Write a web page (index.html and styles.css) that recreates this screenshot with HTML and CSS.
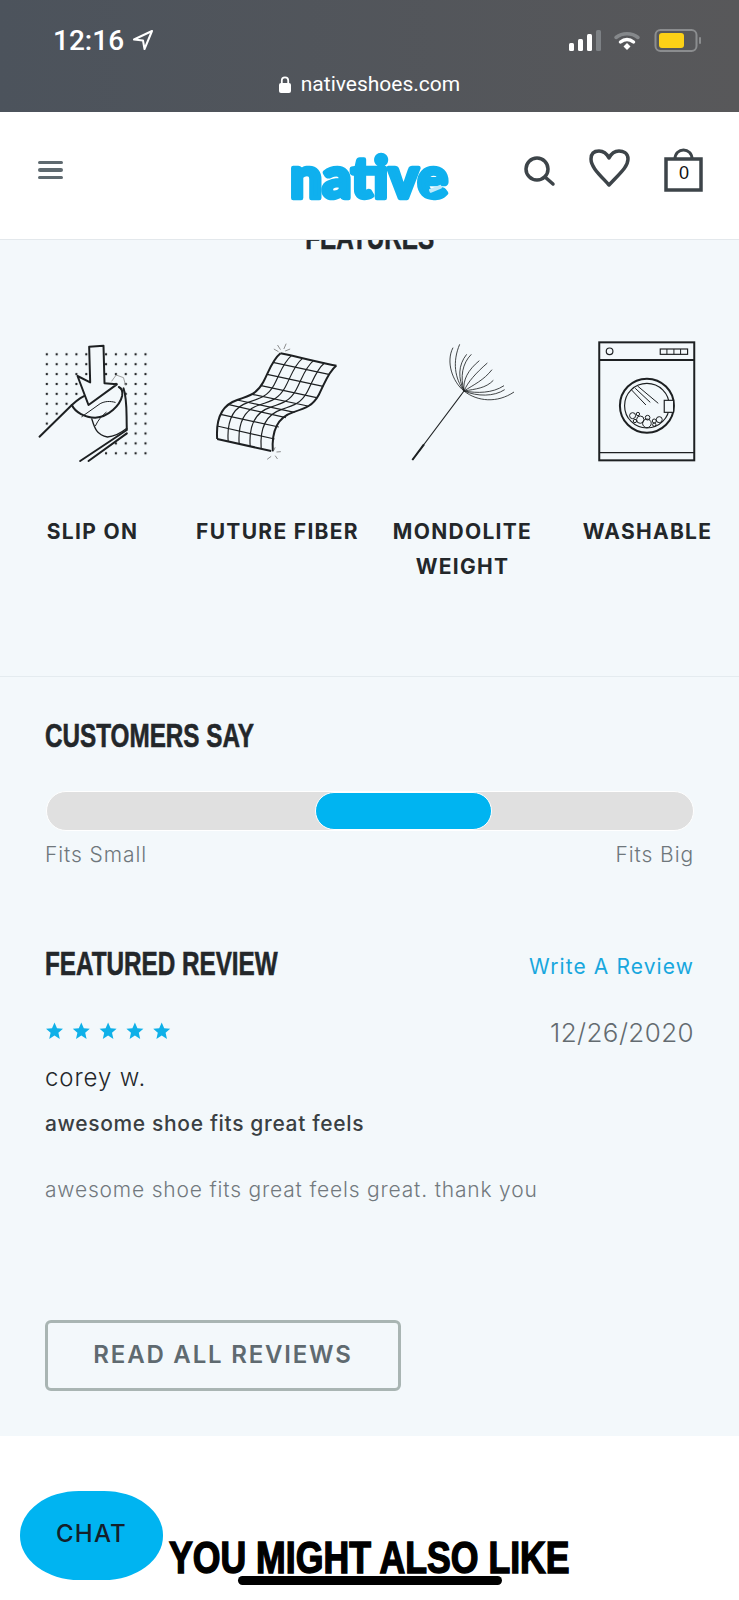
FILE: index.html
```html
<!DOCTYPE html>
<html lang="en">
<head>
    <meta charset="UTF-8">
    <meta name="viewport" content="width=device-width, initial-scale=1.0">
    <title>Native Shoes</title>
    <link rel="stylesheet" href="styles.css">
</head>
<body>
    <div class="status-bar">
        <div class="status-row">
            <div class="status-time">
                <span>12:16</span>
                <svg width="22" height="22" viewBox="0 0 22 22"><path d="M20 2 2 10.5l9 1 1.500 8.500z" fill="none" stroke="#fff" stroke-width="2" stroke-linejoin="round"/></svg>
            </div>
            <svg class="status-icons" width="146" height="24" viewBox="0 0 146 24">
                <rect x="0" y="15" width="5" height="8" rx="1.500" fill="#fff"/>
                <rect x="9" y="11" width="5" height="12" rx="1.500" fill="#fff"/>
                <rect x="18" y="6" width="5" height="17" rx="1.500" fill="#fff"/>
                <rect x="27" y="2" width="5" height="21" rx="1.500" fill="#7d8185"/>
                <path d="M47 9.500c6.500-5 15.500-5 22 0" fill="none" stroke="#85888b" stroke-width="3.500" stroke-linecap="round"/>
                <path d="M51.500 14c4-3.200 9-3.200 13 0" fill="none" stroke="#fff" stroke-width="3.500" stroke-linecap="round"/>
                <path d="M54.500 18.500 58 15l3.500 3.500-3.500 3.500z" fill="#fff"/>
                <rect x="86.500" y="2" width="41" height="21" rx="5" fill="none" stroke="#8b8d8f" stroke-width="2"/>
                <rect x="90" y="5" width="25" height="15" rx="3" fill="#fcd116"/>
                <rect x="130" y="9" width="2" height="7" rx="1" fill="#8b8d8f"/>
            </svg>
        </div>
        <div class="status-url">
            <svg width="12" height="17" viewBox="0 0 12 17"><rect x="0" y="7" width="12" height="10" rx="2" fill="#fff"/><path d="M2.800 8V4.500a3.200 3.200 0 0 1 6.400 0V8" fill="none" stroke="#fff" stroke-width="1.800"/></svg>
            <span>nativeshoes.com</span>
        </div>
    </div>

    <header class="site-header">
        <div class="menu-icon"><span></span><span></span><span></span></div>
        <svg class="logo" width="166" height="84" viewBox="0 -10 166 84">
            <text x="3" y="54" textLength="158" lengthAdjust="spacingAndGlyphs" class="logo-text">native</text>
            <rect x="142" y="43" width="13" height="4" rx="1" fill="#bfe9fa" transform="rotate(-22 148 45)"/>
        </svg>
        <div class="header-icons">
            <svg width="36" height="60" viewBox="0 0 36 60"><circle cx="13" cy="26" r="11" fill="none" stroke="#3d4449" stroke-width="3.500"/><path d="m21 34 8 7" stroke="#3d4449" stroke-width="3.500" stroke-linecap="round"/></svg>
            <svg width="44" height="60" viewBox="0 0 44 60"><path d="M22 42 C12 31 4 24 4 16 C4 9 9 8 12 8 C17 8 20 11 22 15 C24 11 27 8 32 8 C36 8 41 10 41 16 C41 24 32 31 22 42z" fill="none" stroke="#3d4449" stroke-width="3.500" stroke-linejoin="round"/></svg>
            <div class="bag">
                <svg width="42" height="60" viewBox="0 0 42 60"><rect x="3" y="14" width="35" height="31" fill="none" stroke="#3d4449" stroke-width="3.500"/><path d="M12 14c0-12 17-12 17 0" fill="none" stroke="#3d4449" stroke-width="3"/></svg>
                <span class="bag-count">0</span>
            </div>
        </div>
    </header>

    <section class="features">
        <h2 class="features-title condensed"><span>FEATURES</span></h2>
        <div class="feature-grid">
            <div class="feature">
                <svg width="185" height="125" viewBox="-60 45 554 375">
                    <defs>
                        <pattern id="dots" x="65" y="73" width="29.600" height="29.700" patternUnits="userSpaceOnUse"><circle cx="15" cy="15" r="3.500" fill="#1d2022"/></pattern>
                    </defs>
                    <rect x="65" y="73" width="326" height="327" fill="url(#dots)"/>
                    <path d="M40 345 155 240 190 215 310 190 324 240 324 320 205 412 40 412z" fill="#f3f8fb"/>
                    <g fill="none" stroke="#1d2022" stroke-linejoin="round" stroke-linecap="round">
                        <path d="M275 168 288 150 310 158 316 180" stroke="#888" stroke-width="2.500"/>
                        <path d="M58 335 155 240C175 222 190 212 205 208" stroke-width="6"/>
                        <path d="M155 240C165 262 195 278 225 278C265 276 300 240 306 212C308 200 304 190 296 186" stroke-width="6"/>
                        <path d="M310 190C322 225 318 260 320 315L180 408" stroke-width="6"/>
                        <path d="M205 408 320 325" stroke-width="6"/>
                        <path d="M215 282C222 305 228 330 262 336C285 335 305 322 320 310" stroke-width="4"/>
                        <path d="M185 275 240 236C255 228 270 228 285 232" stroke-width="3"/>
                        <path d="M226 302C234 285 245 272 258 262" stroke-width="3"/>
                        <path d="M207 65 250 62 253 175 290 178 205 240 172 153 210 172z" fill="#f3f8fb" stroke-width="6"/>
                    </g>
                </svg>
                <p>SLIP ON</p>
            </div>
            <div class="feature">
                <svg width="185" height="125" viewBox="494 45 554 375">
                    <defs>
                        <path id="wave" d="M780 85C755 105 745 140 728 172C710 205 690 212 650 225C610 238 585 270 590 342"/>
                    </defs>
                    <g fill="none" stroke="#1d2022" stroke-width="3.500">
                        <use href="#wave" transform="translate(33 7)"/>
                        <use href="#wave" transform="translate(66 15)"/>
                        <use href="#wave" transform="translate(99 22)"/>
                        <use href="#wave" transform="translate(132 29)"/>
                        <path d="M757 112 925 148M740 148 908 184M722 182 888 218M695 208 862 243M650 225 822 262M622 238 796 278M600 268 775 306M590 303 762 342"/>
                    </g>
                    <g fill="none" stroke="#1d2022" stroke-width="6" stroke-linejoin="round">
                        <use href="#wave"/>
                        <use href="#wave" transform="translate(167 37)"/>
                        <path d="M780 85C835 96 895 112 948 122M590 342 752 378"/>
                    </g>
                    <path d="M760 72 774 80M771 60 780 74M797 56 790 72M809 72 794 78M764 367 760 376M781 380 768 381M771 402 764 392M740 403 752 394" fill="none" stroke="#777" stroke-width="2.500"/>
                </svg>
                <p>FUTURE FIBER</p>
            </div>
            <div class="feature">
                <svg width="185" height="125" viewBox="-31.500 45 554 375">
                    <path d="M95 405 250 198" fill="none" stroke="#1d2022" stroke-width="3.500"/>
                    <path d="M95 405 130 358" fill="none" stroke="#1d2022" stroke-width="6"/>
                    <g fill="none" stroke="#1d2022" stroke-width="2.500">
                        <path d="M250 198C215 170 195 110 217 68"/>
                        <path d="M250 198C222 160 215 110 237 58"/>
                        <path d="M250 198C232 160 232 120 258 88"/>
                        <path d="M250 198C238 155 245 115 272 88"/>
                        <path d="M250 198C246 165 262 135 296 107"/>
                        <path d="M250 198C262 170 285 145 320 114"/>
                        <path d="M250 198C278 180 310 165 334 134"/>
                        <path d="M250 198C285 192 315 190 338 166"/>
                        <path d="M250 198C290 205 335 205 370 182"/>
                        <path d="M250 198C290 215 340 215 372 194"/>
                        <path d="M250 198C290 230 350 235 400 201"/>
                    </g>
                </svg>
                <p>MONDOLITE WEIGHT</p>
            </div>
            <div class="feature">
                <svg width="185" height="125" viewBox="522.750 45 554 375">
                    <g fill="none" stroke="#1d2022">
                        <rect x="655" y="52" width="285" height="354" stroke-width="6"/>
                        <path d="M655 105H940" stroke-width="6"/>
                        <path d="M655 383H940" stroke-width="3.500"/>
                        <circle cx="686" cy="79" r="10" stroke-width="3.500"/>
                        <rect x="838" y="72" width="82" height="16" stroke-width="3.500"/>
                        <path d="M858 72V88M879 72V88M899 72V88" stroke-width="3"/>
                        <circle cx="798" cy="242" r="81" stroke-width="6"/>
                        <circle cx="798" cy="242" r="67" stroke-width="3.500"/>
                        <rect x="850" y="226" width="28" height="36" fill="#f3f8fb" stroke-width="3.500"/>
                        <path d="M752 195 795 240M763 190 808 232M770 183 832 235" stroke-width="3"/>
                        <g stroke-width="3">
                            <circle cx="755" cy="272" r="9"/>
                            <circle cx="771" cy="267" r="5"/>
                            <circle cx="778" cy="284" r="11"/>
                            <circle cx="800" cy="278" r="7"/>
                            <circle cx="798" cy="295" r="13"/>
                            <circle cx="820" cy="288" r="6"/>
                            <circle cx="835" cy="284" r="9"/>
                            <circle cx="820" cy="299" r="5"/>
                            <circle cx="762" cy="288" r="5"/>
                        </g>
                    </g>
                </svg>
                <p>WASHABLE</p>
            </div>
        </div>
    </section>

    <section class="reviews">
        <h2 class="section-title condensed"><span>CUSTOMERS SAY</span></h2>
        <div class="fit-track"><div class="fit-thumb"></div></div>
        <div class="fit-labels"><span>Fits Small</span><span>Fits Big</span></div>

        <div class="review-head">
            <h2 class="section-title condensed"><span>FEATURED REVIEW</span></h2>
            <a class="write-link" href="#">Write A Review</a>
        </div>
        <div class="review-meta">
            <svg width="126" height="18" viewBox="0 0 126 18">
                <defs><path id="star" d="M8.500 0.500 11 6.300 17 6.800 12.400 10.700 13.800 17 8.500 13.600 3.200 17 4.600 10.700 0 6.800 6 6.300z"/></defs>
                <g fill="#0fb0e8">
                    <use href="#star" x="0"/>
                    <use href="#star" x="26.800"/>
                    <use href="#star" x="53.600"/>
                    <use href="#star" x="80.400"/>
                    <use href="#star" x="107.200"/>
                </g>
            </svg>
            <span class="review-date">12/26/2020</span>
        </div>
        <p class="review-author">corey w.</p>
        <p class="review-title">awesome shoe fits great feels</p>
        <p class="review-body">awesome shoe fits great feels great. thank you</p>
        <a class="read-all" href="#">READ ALL REVIEWS</a>
    </section>

    <section class="also-like">
        <h2 class="also-title condensed"><span>YOU MIGHT ALSO LIKE</span></h2>
    </section>

    <button class="chat-button">CHAT</button>
</body>
</html>
```

FILE: styles.css
```css
body {
    font-family: Inter, "Liberation Sans", sans-serif;
    margin: 0;
    padding: 0;
    background-color: #fff;
    color: #23272a;
}
h2, p {
    margin: 0;
}
.condensed {
    font-family: "Liberation Sans", sans-serif;
    font-weight: 700;
}
.condensed span {
    display: inline-block;
    transform: scaleX(0.735);
    -webkit-text-stroke: 0.6px currentColor;
}

/* phone chrome */
.status-bar {
    height: 112px;
    background: linear-gradient(90deg, #4c535c, #58585a);
    box-sizing: border-box;
    padding: 24px 24px 0 53px;
    color: #fff;
}
.status-row {
    display: flex;
    justify-content: space-between;
    align-items: center;
    height: 32px;
}
.status-time {
    display: flex;
    align-items: center;
    gap: 8px;
    font-family: Roboto, sans-serif;
    font-size: 28px;
    font-weight: 500;
}
.status-url {
    display: flex;
    justify-content: center;
    align-items: center;
    gap: 10px;
    margin: 16px 15px 0 -14px;
    font-family: Roboto, sans-serif;
    font-size: 21px;
}

/* site header */
.site-header {
    display: grid;
    grid-template-columns: 249px 166px 1fr;
    align-items: center;
    height: 128px;
    box-sizing: border-box;
    padding-left: 38px;
    border-bottom: 1px solid #e3e8ec;
    background-color: #fff;
}
.menu-icon {
    display: flex;
    flex-direction: column;
    gap: 4px;
    width: 25px;
    margin-top: -11px;
}
.menu-icon span {
    height: 3.500px;
    border-radius: 2px;
    background-color: #5f6a70;
}
.logo {
    display: block;
}
.logo-text {
    font-family: Lato, sans-serif;
    font-weight: 900;
    font-size: 58px;
    fill: #0fb0ee;
    stroke: #0fb0ee;
    stroke-width: 4.500px;
    stroke-linejoin: round;
}
.header-icons {
    display: flex;
    margin-left: 71px;
    gap: 27px;
}
.bag {
    position: relative;
    margin: 2px 0 0 5px;
}
.bag-count {
    position: absolute;
    left: 0;
    right: 0;
    top: 18px;
    text-align: center;
    font-family: "Liberation Sans", sans-serif;
    font-size: 18px;
    color: #111;
}

/* features */
.features {
    height: 437px;
    box-sizing: border-box;
    overflow: hidden;
    background-color: #f3f8fb;
    border-bottom: 1px solid #e4ebef;
}
.features-title {
    margin-top: -14px;
    text-align: center;
    font-size: 33px;
    line-height: 24px;
    color: #23272a;
}
.feature-grid {
    display: grid;
    grid-template-columns: repeat(4, 1fr);
    margin-top: 90px;
}
.feature svg {
    display: block;
}
.feature p {
    margin-top: 49px;
    padding: 0 10px;
    text-align: center;
    font-size: 21px;
    font-weight: 700;
    line-height: 35px;
    letter-spacing: 1.3px;
    color: #23272a;
}

/* reviews */
.reviews {
    background-color: #f3f8fb;
    padding: 47px 45px 45px 45px;
}
.section-title {
    font-size: 33px;
    line-height: 24px;
    color: #23272a;
}
.section-title span {
    transform-origin: left center;
}
.fit-track {
    height: 40px;
    box-sizing: border-box;
    margin: 43px 0 0 1px;
    border: 1px solid #fff;
    border-radius: 20px;
    background-color: #e0e0e0;
    display: flex;
}
.fit-thumb {
    width: 177px;
    margin-left: 268px;
    box-sizing: border-box;
    border: 1px solid #fff;
    border-radius: 19px;
    background-color: #00b4f1;
}
.fit-labels {
    display: flex;
    justify-content: space-between;
    margin-top: 12px;
    font-size: 21px;
    font-weight: 300;
    line-height: 24px;
    letter-spacing: 0.9px;
    color: #6f777c;
}
.review-head {
    display: flex;
    justify-content: space-between;
    align-items: flex-start;
    margin-top: 85px;
}
.write-link {
    margin: 3px 0 -3px;
    font-size: 21px;
    line-height: 24px;
    letter-spacing: 1.1px;
    color: #18a7de;
    text-decoration: none;
}
.review-meta {
    display: flex;
    justify-content: space-between;
    align-items: center;
    margin-top: 41px;
}
.review-meta svg {
    margin: -2px 0 0 1px;
}
.review-date {
    padding-top: 1px;
    font-size: 26px;
    font-weight: 300;
    line-height: 29px;
    letter-spacing: 0.4px;
    color: #636b70;
}
.review-author {
    margin-top: 16px;
    font-size: 24px;
    font-weight: 300;
    line-height: 30px;
    letter-spacing: 0.9px;
}
.review-title {
    margin-top: 18px;
    font-size: 21px;
    font-weight: 500;
    line-height: 26px;
    letter-spacing: 0.65px;
    color: #3a3f43;
}
.review-body {
    margin-top: 40px;
    font-size: 21px;
    font-weight: 300;
    line-height: 26px;
    letter-spacing: 0.82px;
    color: #72797e;
}
.read-all {
    display: block;
    width: 356px;
    height: 71px;
    box-sizing: border-box;
    margin-top: 117px;
    border: 3px solid #a9b5b3;
    border-radius: 6px;
    text-align: center;
    font-size: 24px;
    font-weight: 600;
    line-height: 64px;
    letter-spacing: 1.8px;
    color: #5f6a70;
    text-decoration: none;
}

/* you might also like */
.also-like {
    padding-top: 106px;
}
.also-title {
    text-align: center;
    font-size: 44px;
    line-height: 32px;
    color: #000;
}
.also-title span {
    transform: scaleX(0.81);
    -webkit-text-stroke: 1.5px #000;
}
.also-title::after {
    content: "";
    display: block;
    width: 264px;
    height: 9px;
    margin: 2px auto 0;
    border-radius: 5px;
    background-color: #000;
}
.chat-button {
    position: fixed;
    left: 20px;
    top: 1491px;
    width: 143px;
    height: 89px;
    padding: 0 0 4px;
    border: none;
    border-radius: 59px / 44px;
    background-color: #00b4f1;
    font-family: Inter, sans-serif;
    font-size: 24px;
    font-weight: 500;
    letter-spacing: 1.2px;
    color: #14202a;
}
```
